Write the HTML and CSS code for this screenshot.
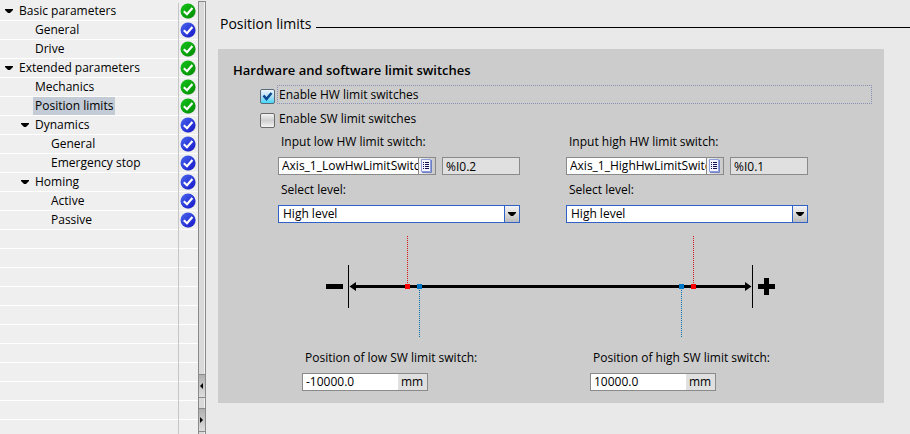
FILE: index.html
```html
<!DOCTYPE html>
<html lang="en">
<head>
<meta charset="utf-8">
<title>Position limits</title>
<link rel="stylesheet" href="styles.css">
</head>
<body>
<svg class="defs" aria-hidden="true">
  <defs>
    <linearGradient id="green" x1="0" y1="0" x2="1" y2="1"><stop offset="0" stop-color="#16c41c"/><stop offset="1" stop-color="#008a00"/></linearGradient>
    <linearGradient id="blue" x1="0" y1="0" x2="1" y2="1"><stop offset="0" stop-color="#4a68ee"/><stop offset="1" stop-color="#1414c8"/></linearGradient>
    <symbol id="ok" viewBox="0 0 16 16"><circle cx="8.5" cy="8.7" r="7.3" fill="#aaa" opacity=".5"/><circle cx="8" cy="8" r="7.5" fill="url(#green)"/><path d="M3.8 8.2 7 11.2 12.4 5" fill="none" stroke="#fff" stroke-width="2.2"/></symbol>
    <symbol id="default" viewBox="0 0 16 16"><circle cx="8.5" cy="8.7" r="7.3" fill="#aaa" opacity=".5"/><circle cx="8" cy="8" r="7.5" fill="url(#blue)"/><path d="M3.8 8.2 7 11.2 12.4 5" fill="none" stroke="#fff" stroke-width="2.2"/></symbol>
    <symbol id="open" viewBox="0 0 8 4"><path d="M0 0H8V1L5 4H3L0 1Z"/></symbol>
    <symbol id="list" viewBox="0 0 12 14"><path d="M.5.5H9.5V12.5H.5Z" fill="#f4f6ff" stroke="#8c9cdc"/><path d="M10.5 1V13.5H1" fill="none" stroke="#6f7fc4"/><path d="M2 3.5H3M2 5.5H3M2 7.5H3M2 9.5H3M4 3.5H8M4 5.5H8M4 7.5H8M4 9.5H8" stroke="#101050"/></symbol>
  </defs>
</svg>
<div class="app">
  <nav class="tree" aria-label="Parameters">
    <ul>
      <li class="row"><svg class="caret"><use href="#open"/></svg><a href="#">Basic parameters</a><svg class="status"><use href="#ok"/></svg></li>
      <li class="row level-1"><a href="#">General</a><svg class="status"><use href="#default"/></svg></li>
      <li class="row level-1"><a href="#">Drive</a><svg class="status"><use href="#ok"/></svg></li>
      <li class="row"><svg class="caret"><use href="#open"/></svg><a href="#">Extended parameters</a><svg class="status"><use href="#ok"/></svg></li>
      <li class="row level-1"><a href="#">Mechanics</a><svg class="status"><use href="#ok"/></svg></li>
      <li class="row level-1"><a href="#" class="current">Position limits</a><svg class="status"><use href="#ok"/></svg></li>
      <li class="row level-1"><svg class="caret"><use href="#open"/></svg><a href="#">Dynamics</a><svg class="status"><use href="#default"/></svg></li>
      <li class="row level-2"><a href="#">General</a><svg class="status"><use href="#default"/></svg></li>
      <li class="row level-2"><a href="#">Emergency stop</a><svg class="status"><use href="#default"/></svg></li>
      <li class="row level-1"><svg class="caret"><use href="#open"/></svg><a href="#">Homing</a><svg class="status"><use href="#default"/></svg></li>
      <li class="row level-2"><a href="#">Active</a><svg class="status"><use href="#default"/></svg></li>
      <li class="row level-2"><a href="#">Passive</a><svg class="status"><use href="#default"/></svg></li>
    </ul>
  </nav>
  <div class="splitter">
    <button type="button" aria-label="Collapse"><svg viewBox="0 0 4 6"><path d="M3 0V6L0 3Z"/></svg></button>
    <button type="button" aria-label="Expand"><svg viewBox="0 0 4 6"><path d="M0 0V6L3 3Z"/></svg></button>
  </div>
  <main class="content">
    <h1 class="heading">Position limits</h1>
    <section class="panel">
      <h2>Hardware and software limit switches</h2>
      <div class="option focused"><input type="checkbox" id="hw" checked><label for="hw">Enable HW limit switches</label></div>
      <div class="option"><input type="checkbox" id="sw"><label for="sw">Enable SW limit switches</label></div>
      <div class="columns">
        <div class="group">
          <label for="low">Input low HW limit switch:</label>
          <div class="fields">
            <div class="tag"><input id="low" type="text" value="Axis_1_LowHwLimitSwitch"><button type="button" aria-label="Browse"><svg><use href="#list"/></svg></button></div>
            <input class="address" type="text" value="%I0.2" readonly aria-label="Low address">
          </div>
          <label for="low-level">Select level:</label>
          <div class="select"><select id="low-level"><option>High level</option><option>Low level</option></select><span class="arrow"><svg><use href="#open"/></svg></span></div>
        </div>
        <div class="group">
          <label for="high">Input high HW limit switch:</label>
          <div class="fields">
            <div class="tag"><input id="high" type="text" value="Axis_1_HighHwLimitSwitch"><button type="button" aria-label="Browse"><svg><use href="#list"/></svg></button></div>
            <input class="address" type="text" value="%I0.1" readonly aria-label="High address">
          </div>
          <label for="high-level">Select level:</label>
          <div class="select"><select id="high-level"><option>High level</option><option>Low level</option></select><span class="arrow"><svg><use href="#open"/></svg></span></div>
        </div>
      </div>
      <svg class="axis" viewBox="0 0 450 102" shape-rendering="crispEdges" role="img" aria-label="Axis travel range">
        <path d="M1 48H18V53H1ZM433 48H450V53H433ZM439 42H444V59H439Z"/>
        <path d="M23 29H24V72H23ZM427 29H428V72H427ZM30 49H421V52H30Z"/>
        <path shape-rendering="auto" d="M24.500 50.500 31 46V55ZM426.500 50.500 420 46V55Z"/>
        <path d="M82.500 0V48M368.500 0V48" stroke="#d01818" stroke-dasharray="1 1"/>
        <path d="M94.500 54V102M356.500 54V102" stroke="#0070b0" stroke-dasharray="1 1"/>
        <path d="M80 48H85V53H80ZM366 48H371V53H366Z" fill="#f00"/>
        <path d="M92 48H97V53H92ZM354 48H359V53H354Z" fill="#0078c8"/>
      </svg>
      <div class="columns positions">
        <div class="group">
          <label for="low-pos">Position of low SW limit switch:</label>
          <div class="measure"><input id="low-pos" type="text" value="-10000.0"><span>mm</span></div>
        </div>
        <div class="group">
          <label for="high-pos">Position of high SW limit switch:</label>
          <div class="measure"><input id="high-pos" type="text" value="10000.0"><span>mm</span></div>
        </div>
      </div>
    </section>
  </main>
</div>
</body>
</html>
```
FILE: styles.css
```css
* { box-sizing: border-box; }
body, button, input, select { font: 12px/18px "Open Sans", "Noto Sans", sans-serif; color: #000; }
body { margin: 0; background: #e9e9e9; }
.defs { position: absolute; width: 0; height: 0; }
svg { display: block; flex: none; }
.app { display: flex; min-height: 100vh; }

.tree {
  flex: none;
  width: 198px;
  padding: 2px 1px 0;
  background:
    linear-gradient(#c6c6c6, #c6c6c6) 178px 3px / 1px 100% no-repeat,
    repeating-linear-gradient(#efefef 0 18px, #fff 18px 19px) 0 2px / 100% 100% no-repeat,
    #efefef;
}
.tree ul { margin: 0; padding: 0; list-style: none; }
.row { position: relative; display: flex; align-items: center; height: 19px; padding: 0 1px 1px 16px; }
.level-1 { padding-left: 32px; }
.level-2 { padding-left: 48px; }
.row a { padding: 0 2px; color: inherit; text-decoration: none; }
.row .current { background: #c3ccd6; }
.caret { position: absolute; width: 8px; height: 4px; margin-left: -12px; }
.status { width: 16px; height: 16px; margin-left: auto; }

.splitter {
  flex: none;
  display: flex;
  flex-direction: column;
  justify-content: flex-end;
  gap: 10px;
  width: 8px;
  margin-top: 1px;
  padding-bottom: 2px;
  border: 1px solid #8a8a8a;
  border-bottom: 0;
  background: #d9d9d9;
  box-shadow: inset -1px 0 #f0f0f0;
}
.splitter button { display: flex; align-items: center; justify-content: center; width: 6px; height: 24px; padding: 0; border: solid #8a8a8a; border-width: 1px 0; background: linear-gradient(#b0b0b0, #dedede); }
.splitter svg { width: 4px; height: 6px; }

.content { flex: 1; min-width: 0; padding: 14px 0 31px 12px; }
.heading { display: flex; align-items: center; gap: 5px; margin: 0 0 15px 2px; font-size: 14px; line-height: 20px; font-weight: 400; }
.heading::after { content: ""; flex: 1; height: 1px; margin-top: 7px; background: #000; }
.panel { margin-right: 26px; padding: 11px 12px 12px 15px; background: #ccc; }
.panel h2 { margin: 0 0 5px; font-size: 13px; line-height: 20px; font-weight: 600; }

.option { display: flex; align-items: center; gap: 2px; height: 19px; margin: 0 0 5px 27px; }
.option label { flex: 1; border: 1px dotted transparent; padding-left: 1px; line-height: 17px; }
.focused label { border-color: #8a90b4; }
.option input { appearance: none; width: 15px; height: 15px; margin: 3px 0 0; border: 1px solid #6c6c6c; border-radius: 2px; background: linear-gradient(#f2f2f2, #cfcfcf 50%, #f4f4f4); }
.option input:checked {
  border-color: #5a6a78;
  background: url("data:image/svg+xml,%3Csvg xmlns='http://www.w3.org/2000/svg' viewBox='0 0 13 13'%3E%3Cpath d='M2.500 5.500 5.500 9 10.500 3' fill='none' stroke='%23084890' stroke-width='2.500'/%3E%3C/svg%3E"), linear-gradient(#eef6fc, #b4dcf4 50%, #40d8f8);
}

.columns { display: grid; grid-template-columns: 242px 242px; gap: 46px; margin-left: 45px; }
.group > label { display: block; height: 18px; margin: 0 0 6px 3px; white-space: nowrap; }
.fields { display: flex; gap: 6px; margin-bottom: 6px; }
.tag { display: flex; width: 158px; height: 18px; border: 1px solid #8a8a8a; background: #fff; }
.tag input, .measure input { flex: 1; min-width: 0; height: 16px; padding: 0 0 0 3px; border: 0; background: #fff; line-height: 16px; }
.tag button { display: flex; align-items: center; justify-content: center; width: 17px; padding: 0; border: 0; border-left: 1px solid #8a8a8a; background: linear-gradient(90deg, #f4f4f4, #c8c8c8); }
.tag svg { width: 12px; height: 14px; }
.address { flex: 1; min-width: 0; height: 18px; padding: 0 3px; border: 1px solid #8a8a8a; background: #e0e0e0; line-height: 16px; }
.select { position: relative; height: 18px; }
.select select { appearance: none; display: block; width: 100%; height: 18px; padding: 0 20px 0 4px; border: 1px solid #2f62c8; border-radius: 0; background: #fff; line-height: 16px; }
.arrow { position: absolute; top: 1px; right: 1px; display: flex; align-items: center; justify-content: center; width: 15px; height: 16px; border-left: 1px solid #2f62c8; background: linear-gradient(#f4f4f4, #bcbcbc); pointer-events: none; }
.arrow svg { width: 8px; height: 4px; }

.axis { width: 450px; height: 102px; margin: 13px 0 11px 92px; }
.positions { margin-left: 69px; }
.measure { display: flex; width: 126px; height: 18px; border: 1px solid #8a8a8a; background: #e0e0e0; }
.measure span { width: 29px; padding-left: 3px; line-height: 16px; }
```
